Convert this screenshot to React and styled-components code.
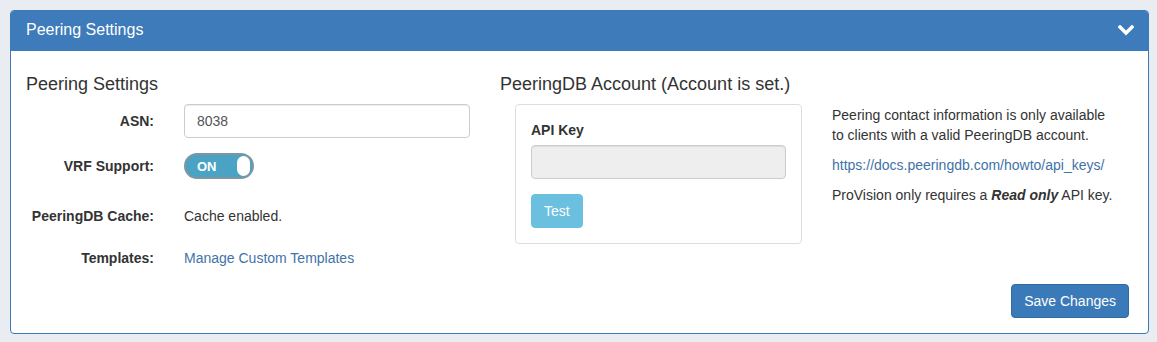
import React from 'react';
import styled, { createGlobalStyle } from 'styled-components';

const GlobalStyle = createGlobalStyle`
    html, body {
        margin: 0;
        background: #e9ecf0;
        font-family: "Liberation Sans", Arial, sans-serif;
        font-size: 14px;
        color: #333;
    }
    * { box-sizing: border-box; }
`;

const Page = styled.div`
    padding: 10px 8px 8px 10px;
`;

const Panel = styled.section`
    background: #fff;
    border: 1px solid #3d7ab8;
    border-radius: 4px;
    overflow: hidden;
`;

const PanelHeading = styled.header`
    height: 39px;
    background: #3d7bba;
    color: #fff;
    display: flex;
    align-items: center;
    justify-content: space-between;
    padding: 0 14px 0 15px;
    font-size: 16px;
    h3 {
        margin: 0;
        font-size: 16px;
        font-weight: 400;
        padding-bottom: 1px;
    }
`;

const PanelBody = styled.div`
    padding: 15px 19px 15px 15px;
    border-top: 1px solid #3d7ab8;
`;

const Columns = styled.div`
    display: flex;
    gap: 30px;
`;

const LeftCol = styled.div`
    width: 444px;
`;

const RightCol = styled.div`
    flex: 1;
`;

const SectionTitle = styled.h4`
    margin: 8px 0 10px;
    font-size: 18px;
    font-weight: 400;
    line-height: 20px;
    color: #333;
`;

const FormRow = styled.div`
    display: grid;
    grid-template-columns: 128px 286px;
    column-gap: 30px;
    align-items: center;
    min-height: ${p => p.$h}px;
    margin-top: ${p => p.$mt || 0}px;
`;

const Label = styled.label`
    text-align: right;
    font-weight: 700;
    line-height: 20px;
`;

const TextInput = styled.input`
    width: 100%;
    height: ${p => p.$h || 34}px;
    padding: 6px 12px;
    font: inherit;
    font-size: 14px;
    color: #555;
    background: ${p => (p.disabled ? '#eee' : '#fff')};
    border: 1px solid #ccc;
    border-radius: 4px;
    box-shadow: inset 0 1px 1px rgba(0,0,0,.075);
    outline: none;
`;

const Toggle = styled.div`
    width: 70px;
    height: 26px;
    border-radius: 13px;
    background: #4aa3c5;
    border: 2px solid #7f95a2;
    display: flex;
    align-items: center;
    justify-content: space-between;
    padding: 0 2px 0 11px;
    color: #fff;
    font-weight: 700;
    font-size: 13px;
`;

const Knob = styled.span`
    width: 13px;
    height: 20px;
    border-radius: 7px;
    background: #fff;
`;

const Static = styled.span`
    line-height: 20px;
`;

const Link = styled.a`
    color: #3f73a8;
    text-decoration: none;
    line-height: 20px;
`;

const AccountRow = styled.div`
    display: flex;
    gap: 30px;
    padding-left: 15px;
`;

const Well = styled.div`
    width: 287px;
    border: 1px solid #ddd;
    border-radius: 4px;
    padding: 15px;
`;

const FieldLabel = styled.div`
    font-weight: 700;
    line-height: 20px;
    margin-bottom: 5px;
`;

const Button = styled.button`
    font: inherit;
    font-size: 14px;
    line-height: 20px;
    padding: 6px 12px;
    border-radius: 4px;
    color: #fff;
    border: 1px solid ${p => (p.$variant === 'info' ? '#6bc0df' : '#2e6da4')};
    background: ${p => (p.$variant === 'info' ? '#6bc0df' : '#3a7ab8')};
    margin-top: ${p => p.$mt || 0}px;
    cursor: pointer;
`;

const Info = styled.div`
    width: 287px;
    padding-top: 1px;
    p {
        margin: 0 0 10px;
        line-height: 20px;
    }
`;

const Footer = styled.div`
    display: flex;
    justify-content: flex-end;
    margin-top: 16px;
`;

const Chevron = () => (
    <svg width="16" height="11" viewBox="0 0 16 11">
        <polyline points="2,2 8,8 14,2" fill="none" stroke="#fff" strokeWidth="3.4" strokeLinecap="square" />
    </svg>
);

export default function App() {
    return (
        <Page>
            <GlobalStyle />
            <Panel>
                <PanelHeading>
                    <h3>Peering Settings</h3>
                    <Chevron />
                </PanelHeading>
                <PanelBody>
                    <Columns>
                        <LeftCol>
                            <SectionTitle>Peering Settings</SectionTitle>
                            <FormRow $h={34}>
                                <Label>ASN:</Label>
                                <TextInput defaultValue="8038" />
                            </FormRow>
                            <FormRow $h={26} $mt={15}>
                                <Label>VRF Support:</Label>
                                <Toggle>ON<Knob /></Toggle>
                            </FormRow>
                            <FormRow $h={20} $mt={27}>
                                <Label>PeeringDB Cache:</Label>
                                <Static>Cache enabled.</Static>
                            </FormRow>
                            <FormRow $h={20} $mt={22}>
                                <Label>Templates:</Label>
                                <Link href="#">Manage Custom Templates</Link>
                            </FormRow>
                        </LeftCol>
                        <RightCol>
                            <SectionTitle>PeeringDB Account (Account is set.)</SectionTitle>
                            <AccountRow>
                                <Well>
                                    <FieldLabel>API Key</FieldLabel>
                                    <TextInput disabled />
                                    <Button $variant="info" $mt={15}>Test</Button>
                                </Well>
                                <Info>
                                    <p>Peering contact information is only available to clients with a valid PeeringDB account.</p>
                                    <p><Link href="#">https://docs.peeringdb.com/howto/api_keys/</Link></p>
                                    <p>ProVision only requires a <b><i>Read only</i></b> API key.</p>
                                </Info>
                            </AccountRow>
                        </RightCol>
                    </Columns>
                    <Footer>
                        <Button>Save Changes</Button>
                    </Footer>
                </PanelBody>
            </Panel>
        </Page>
    );
}
